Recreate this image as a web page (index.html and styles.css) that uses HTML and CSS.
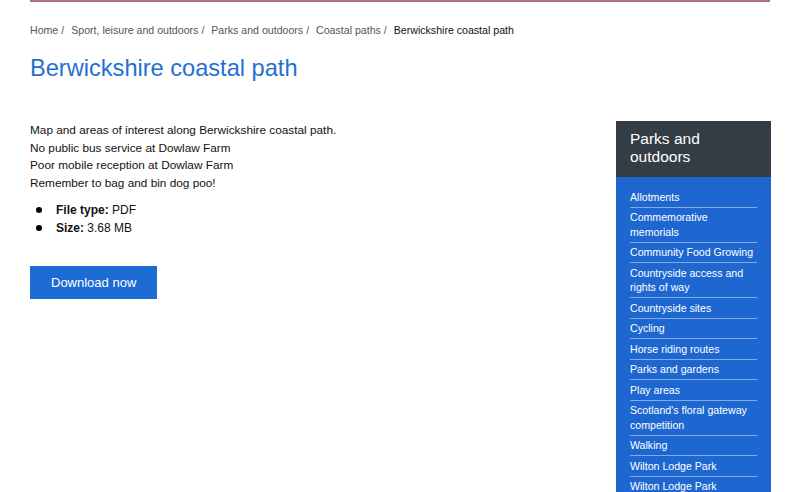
FILE: index.html
```html
<!DOCTYPE html>
<html lang="en">
<head>
<meta charset="utf-8">
<title>Berwickshire coastal path</title>
<link rel="stylesheet" href="styles.css">
</head>
<body>
<div class="topline"></div>
<div class="page">
  <nav class="breadcrumb">
    <a href="#">Home</a><span class="sep">/</span>
    <a href="#">Sport, leisure and outdoors</a><span class="sep">/</span>
    <a href="#">Parks and outdoors</a><span class="sep">/</span>
    <a href="#">Coastal paths</a><span class="sep">/</span>
    <span class="current">Berwickshire coastal path</span>
  </nav>
  <h1 class="title">Berwickshire coastal path</h1>
  <div class="content">
    <main class="main">
      <p class="intro">Map and areas of interest along Berwickshire coastal path.<br>No public bus service at Dowlaw Farm<br>Poor mobile reception at Dowlaw Farm<br>Remember to bag and bin dog poo!</p>
      <ul class="meta">
        <li><b>File type:</b> PDF</li>
        <li><b>Size:</b> 3.68 MB</li>
      </ul>
      <a class="button" href="#">Download now</a>
    </main>
    <aside class="side">
      <h2 class="side-head">Parks and outdoors</h2>
      <ul class="side-list">
        <li><a href="#">Allotments</a></li>
        <li><a href="#">Commemorative memorials</a></li>
        <li><a href="#">Community Food Growing</a></li>
        <li><a href="#">Countryside access and rights of way</a></li>
        <li><a href="#">Countryside sites</a></li>
        <li><a href="#">Cycling</a></li>
        <li><a href="#">Horse riding routes</a></li>
        <li><a href="#">Parks and gardens</a></li>
        <li><a href="#">Play areas</a></li>
        <li><a href="#">Scotland's floral gateway competition</a></li>
        <li><a href="#">Walking</a></li>
        <li><a href="#">Wilton Lodge Park</a></li>
        <li><a href="#">Wilton Lodge Park</a></li>
      </ul>
    </aside>
  </div>
</div>
</body>
</html>
```
FILE: styles.css
```css
html, body {
  margin: 0;
  padding: 0;
  background: #fff;
}
body {
  font-family: "Liberation Sans", Arial, sans-serif;
  color: #111;
  overflow: hidden;
  height: 492px;
}
.topline {
  margin: 0 30px;
  height: 2px;
  background: #a9708f;
}
.page {
  padding: 0 30px;
}
.breadcrumb {
  padding-top: 21px;
  font-size: 10.6px;
  line-height: 14px;
  color: #555;
}
.breadcrumb a {
  color: #555;
  text-decoration: none;
}
.breadcrumb .sep {
  margin: 0 4px 0 3px;
}
.breadcrumb .current {
  color: #111;
}
.title {
  margin: 18px 0 0;
  font-size: 23.6px;
  line-height: 27px;
  font-weight: normal;
  color: #2470d0;
}
.content {
  display: flex;
  justify-content: space-between;
  margin-top: 39px;
}
.main {
  flex: 1;
  padding-top: 1px;
}
.intro {
  margin: 0;
  font-size: 11.8px;
  line-height: 17.7px;
}
.meta {
  margin: 8px 0 0;
  padding: 0 0 0 26px;
  font-size: 12px;
  line-height: 18px;
}
.meta li {
  list-style: none;
  position: relative;
}
.meta li::before {
  content: "";
  position: absolute;
  left: -20px;
  top: 6px;
  width: 6px;
  height: 6px;
  border-radius: 50%;
  background: #000;
}
.button {
  display: inline-block;
  margin-top: 29px;
  background: #1d6bd5;
  color: #fff;
  text-decoration: none;
  font-size: 13px;
  line-height: 33px;
  height: 33px;
  padding: 0 21px;
}
.side {
  width: 155px;
  margin-right: -1px;
}
.side-head {
  margin: 0;
  background: #343c46;
  color: #fff;
  font-weight: normal;
  font-size: 15.5px;
  line-height: 18px;
  padding: 9px 14px 11px;
}
.side-list {
  margin: 0;
  background: #1e67d1;
  padding: 10px 14px 10px;
  list-style: none;
}
.side-list li {
  border-bottom: 1px solid rgba(255, 255, 255, 0.45);
  padding: 2.5px 0;
  font-size: 10.6px;
  line-height: 14.5px;
}
.side-list a {
  color: #fff;
  text-decoration: none;
}
```
